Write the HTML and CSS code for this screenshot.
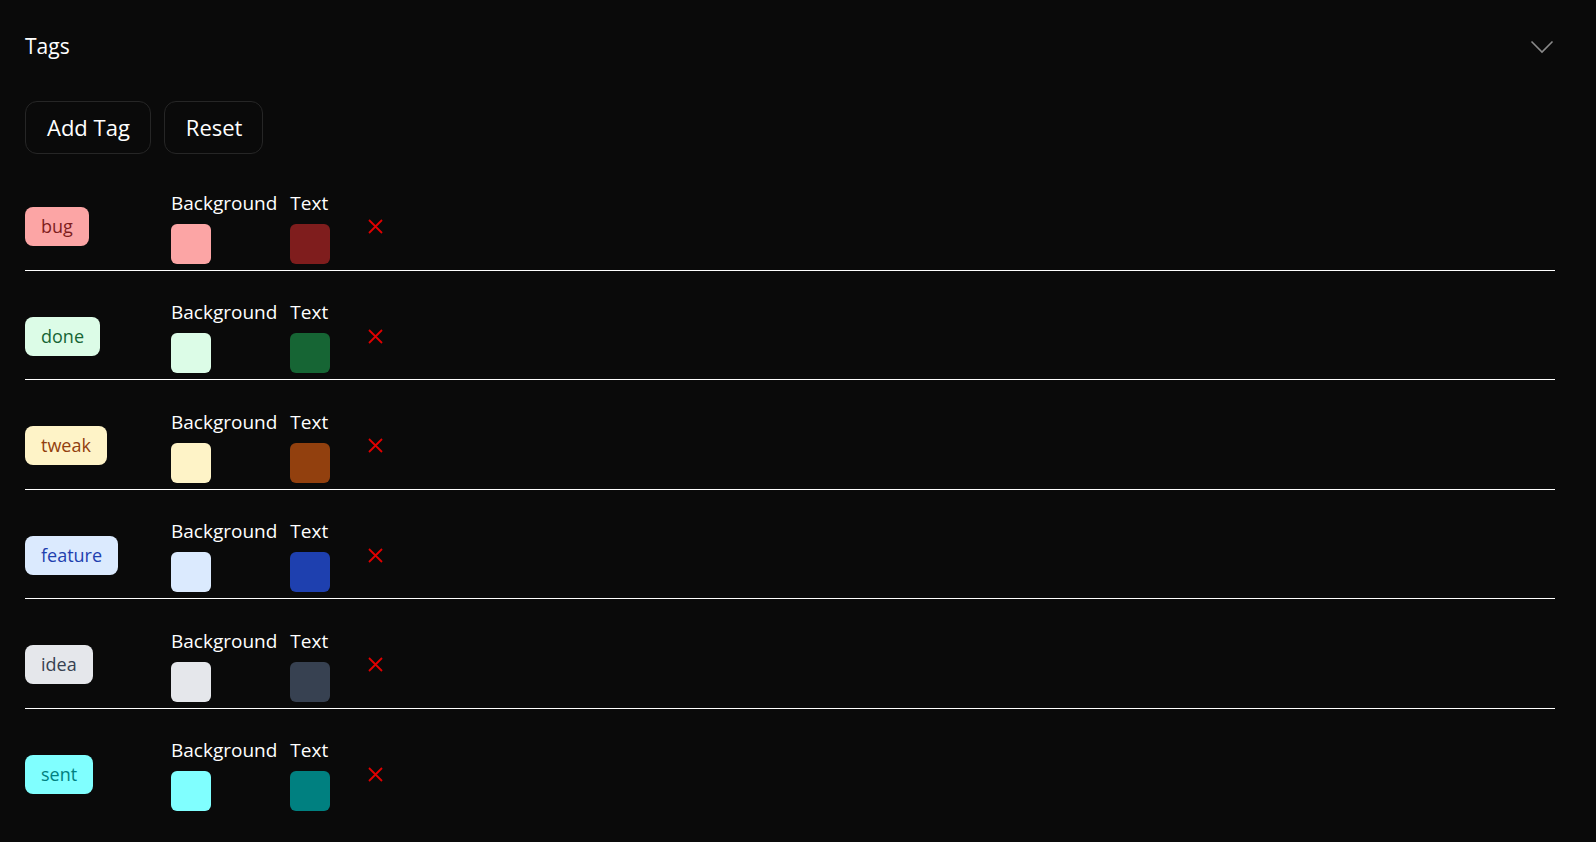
FILE: index.html
```html
<!DOCTYPE html>
<html lang="en">
<head>
    <meta charset="UTF-8">
    <meta name="viewport" content="width=device-width, initial-scale=1.0">
    <title>Tags</title>
    <link rel="stylesheet" href="styles.css">
</head>
<body>
    <div class="panel">
        <div class="panel-header">
            <h2>Tags</h2>
            <svg class="chevron" width="24" height="14" viewBox="0 0 24 14">
                <path d="M1.5 1.5 L12 12 L22.5 1.5" fill="none" stroke="#8a8a8a" stroke-width="1.6"/>
            </svg>
        </div>

        <div class="toolbar">
            <button class="btn" id="add-btn">Add Tag</button>
            <button class="btn" id="reset-btn">Reset</button>
        </div>

        <!-- Tag rows get rendered here -->
        <div id="tag-list" class="tag-list"></div>
    </div>

    <script>
        const defaultTags = [
            { name: 'bug', bg: '#fca5a5', text: '#7f1d1d' },
            { name: 'done', bg: '#dcfce7', text: '#166534' },
            { name: 'tweak', bg: '#fef3c7', text: '#92400e' },
            { name: 'feature', bg: '#dbeafe', text: '#1e40af' },
            { name: 'idea', bg: '#e5e7eb', text: '#374151' },
            { name: 'sent', bg: '#80ffff', text: '#008080' },
        ];

        let tags = defaultTags.map(t => ({ ...t }));
        const tagList = document.getElementById('tag-list');

        const colorField = (label, color) => `
            <div class="color-field">
                <span class="color-label">${label}</span>
                <div class="swatch" style="background-color: ${color}"></div>
            </div>`;

        // Build every row from the tags array
        const renderTags = () => {
            tagList.innerHTML = tags.map((tag, index) => `
                <div class="tag-row">
                    <div class="tag-cell">
                        <span class="tag" style="background-color: ${tag.bg}; color: ${tag.text}">${tag.name}</span>
                    </div>
                    ${colorField('Background', tag.bg)}
                    ${colorField('Text', tag.text)}
                    <button class="delete-btn" data-index="${index}" aria-label="Delete">
                        <svg width="15" height="15" viewBox="0 0 15 15">
                            <path d="M1 1 L14 14 M14 1 L1 14" stroke="#e00000" stroke-width="1.8"/>
                        </svg>
                    </button>
                </div>`).join('');

            document.querySelectorAll('.delete-btn').forEach(btn => {
                btn.addEventListener('click', () => {
                    tags.splice(Number(btn.dataset.index), 1);
                    renderTags();
                });
            });
        };

        document.getElementById('add-btn').addEventListener('click', () => {
            tags.push({ name: 'new', bg: '#e5e7eb', text: '#374151' });
            renderTags();
        });

        document.getElementById('reset-btn').addEventListener('click', () => {
            tags = defaultTags.map(t => ({ ...t }));
            renderTags();
        });

        renderTags();
    </script>
</body>
</html>
```

FILE: styles.css
```css
/* Page basics */
body {
    margin: 0;
    background-color: #0a0a0a;
    color: #fff;
    font-family: "Open Sans", "Noto Sans", sans-serif;
    overflow: hidden;
}

.panel {
    padding: 32px 41px 0 25px;
}

/* Header with title and collapse arrow */
.panel-header {
    display: flex;
    justify-content: space-between;
    align-items: center;
}

.panel-header h2 {
    margin: 0;
    font-size: 21px;
    font-weight: 400;
    line-height: 28px;
}

.chevron {
    margin-top: 2px;
    margin-right: 1px;
}

/* Add / Reset buttons */
.toolbar {
    display: flex;
    gap: 13px;
    margin-top: 41px;
    margin-bottom: 7px;
}

.btn {
    font-family: inherit;
    font-size: 22px;
    line-height: 31px;
    padding: 10px 20px 10px 21px;
    color: #fff;
    background-color: #0a0a0a;
    border: 1px solid #262626;
    border-radius: 12px;
    cursor: pointer;
}

.btn:hover {
    background-color: #161616;
}

/* Each tag row */
.tag-row {
    display: flex;
    align-items: center;
    padding: 28.5px 0 6px;
    border-bottom: 1px solid #fff;
}

.tag-row:last-child {
    border-bottom: none;
}

.tag-cell {
    width: 146px;
    flex-shrink: 0;
}

.tag {
    display: inline-block;
    font-size: 18px;
    line-height: 27px;
    padding: 6px 16px;
    border-radius: 8px;
}

.color-field {
    display: flex;
    flex-direction: column;
    align-items: flex-start;
    margin-right: 13px;
}

.color-label {
    font-size: 19px;
    line-height: 27px;
    margin-bottom: 7px;
}

.swatch {
    width: 40px;
    height: 40px;
    border-radius: 6px;
}

.delete-btn {
    display: flex;
    margin-left: 25px;
    padding: 0;
    background: none;
    border: none;
    cursor: pointer;
}
```
